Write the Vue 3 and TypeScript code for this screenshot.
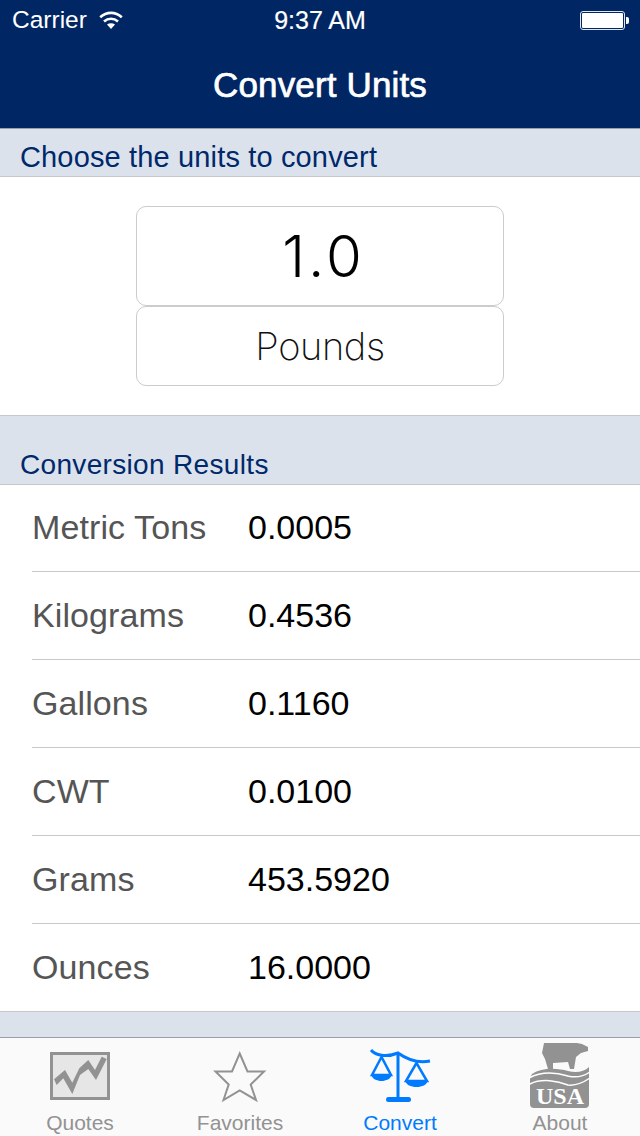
<template>
  <div class="screen">
    <header class="top">
      <div class="status">
        <div class="status-left">
          <span>Carrier</span>
          <svg class="wifi" width="24" height="18" viewBox="0 0 24 18">
            <path d="M1.200 6.200C7.500 .4 16.500 .4 22.800 6.200" fill="none" stroke="#fff" stroke-width="2.600" />
            <path d="M5 10.400c4.200-3.600 9.800-3.600 14 0" fill="none" stroke="#fff" stroke-width="2.600" />
            <path d="M8 13.500c2.400-1.700 5.600-1.700 8 0L12 18z" fill="#fff" />
          </svg>
        </div>
        <span class="clock">9:37 AM</span>
        <div class="battery"><i></i></div>
      </div>
      <h1>Convert Units</h1>
    </header>

    <h2 class="section first">Choose the units to convert</h2>
    <section class="form">
      <div class="field value">1.0</div>
      <div class="field unit">Pounds</div>
    </section>

    <h2 class="section second">Conversion Results</h2>
    <ul class="results">
      <li v-for="row in results" :key="row.name">
        <span class="name">{{ row.name }}</span>
        <span class="num">{{ row.value }}</span>
      </li>
    </ul>

    <div class="spacer"></div>

    <nav class="tabs">
      <div class="tab quotes">
        <svg width="60" height="48" viewBox="0 0 60 48">
          <rect x="1.500" y="1.500" width="57" height="45" fill="#e6e6e6" stroke="#929292" stroke-width="3" />
          <path d="M4 27.300L15 18l7.300 12.700 7-14.400L38.300 8 45 18l6.700-13.300 5 2.300L46 28 38.300 17 30 23l-7.700 19-9-15.700L6.700 33z" fill="#929292" />
        </svg>
        <span>Quotes</span>
      </div>
      <div class="tab star">
        <svg width="54" height="52" viewBox="0 0 54 52">
          <path d="M26.700 2.500L34.500 20.500H51L37.700 33.500 43 49 26.700 39.500 10.500 49 15.700 33.500 2.500 20.500H19z" fill="none" stroke="#929292" stroke-width="2" />
        </svg>
        <span>Favorites</span>
      </div>
      <div class="tab active">
        <svg width="60" height="54" viewBox="0 0 60 54">
          <g fill="none" stroke="#007aff">
            <path d="M1 1C5 6 16 9 28 4 35 9 45 15 60 12" stroke-width="3" />
            <path d="M28 4v45" stroke-width="3" />
            <path d="M11.500 8L2 26h19zM46.500 14L36 32h21z" stroke-width="2.500" />
          </g>
          <path d="M1 25H22C21 30 16 32 11.500 32 7 32 2 30 1 25zM35 31H58C57 36 52 38 46.500 38 41 38 36 36 35 31z" fill="#007aff" />
          <rect x="16" y="48" width="25" height="5" rx="2.500" fill="#007aff" />
        </svg>
        <span>Convert</span>
      </div>
      <div class="tab about">
        <svg width="60" height="68" viewBox="0 0 60 68">
          <path d="M14 1L12 11l3 6 3 10h5V21l15-1 2 7h4l2-12 5-4 7-2V5L52 2l-5-1z" fill="#929292" />
          <path d="M2 32C12 25 28 26 38 29 46 31 54 30 59 25V62a4 4 0 0 1-4 4H4a4 4 0 0 1-4-4V36z" fill="#929292" />
          <path d="M-1 36C12 29 28 31 38 34 46 36 54 34 60 30" fill="none" stroke="#fff" stroke-width="1.500" />
          <path d="M0 42C12 36 28 39 38 43 46 44 54 40 60 36" fill="none" stroke="#fff" stroke-width="1.500" />
          <text x="30" y="62" text-anchor="middle" class="usa">USA</text>
        </svg>
        <span>About</span>
      </div>
    </nav>
  </div>
</template>

<script setup lang="ts">
interface ResultRow {
  name: string
  value: string
}

const results: ResultRow[] = [
  { name: 'Metric Tons', value: '0.0005' },
  { name: 'Kilograms', value: '0.4536' },
  { name: 'Gallons', value: '0.1160' },
  { name: 'CWT', value: '0.0100' },
  { name: 'Grams', value: '453.5920' },
  { name: 'Ounces', value: '16.0000' },
]
</script>

<style>
html,
body {
  margin: 0;
  background: #fff;
}
</style>

<style scoped>
.screen {
  width: 640px;
  height: 1136px;
  display: flex;
  flex-direction: column;
  overflow: hidden;
  background: #fff;
  font-family: 'Liberation Sans', Arial, sans-serif;
}

.top {
  height: 128px;
  background: #002663;
  color: #fff;
  border-bottom: 1px solid #9a9fa8;
  flex: none;
}

.status {
  height: 40px;
  padding: 0 12px;
  display: grid;
  grid-template-columns: 1fr auto 1fr;
  align-items: center;
  font-size: 24.500px;
}

.status-left {
  display: flex;
  align-items: center;
  gap: 12px;
}

.wifi {
  margin-top: -1px;
}

.clock {
  font-size: 25px;
  -webkit-text-stroke: 0.2px #fff;
}

.battery {
  justify-self: end;
  width: 45px;
  height: 19px;
  margin: 1px 3px 0 0;
  padding: 1px;
  box-sizing: border-box;
  border: 1px solid #dfe6f2;
  border-radius: 3px;
  position: relative;
}

.battery i {
  display: block;
  height: 100%;
  background: #fff;
  border-radius: 1px;
}

.battery::after {
  content: '';
  position: absolute;
  right: -5px;
  top: 5px;
  width: 3px;
  height: 7px;
  border-radius: 0 2px 2px 0;
  background: #fff;
}

h1 {
  margin: 0;
  height: 88px;
  line-height: 89px;
  text-align: center;
  font-size: 35px;
  font-weight: 400;
  letter-spacing: 0.15px;
  -webkit-text-stroke: 0.7px #fff;
}

.section {
  margin: 0;
  padding: 0 20px;
  box-sizing: border-box;
  flex: none;
  display: flex;
  align-items: flex-end;
  background: #dce2ec;
  border-bottom: 1px solid #c6c8cc;
  color: #00296b;
  font-weight: 400;
  line-height: 38px;
}

.section.first {
  height: 48px;
  font-size: 29px;
  letter-spacing: 0.15px;
}

.section.second {
  height: 70px;
  border-top: 1px solid #c6c8cc;
  font-size: 28px;
  letter-spacing: 0.33px;
}

.form {
  height: 238px;
  flex: none;
  box-sizing: border-box;
  padding-top: 29px;
  display: flex;
  flex-direction: column;
  align-items: center;
}

.field {
  width: 368px;
  box-sizing: border-box;
  border: 1px solid #ccc;
  border-radius: 10px;
  display: flex;
  align-items: center;
  justify-content: center;
  font-family: Inter, 'Liberation Sans', sans-serif;
  font-weight: 200;
  color: #000;
}

.value {
  height: 100px;
  padding-left: 7px;
  font-size: 58px;
  font-weight: 300;
  letter-spacing: 3px;
}

.unit {
  height: 80px;
  font-size: 38px;
  letter-spacing: -0.4px;
  color: #111;
}

.results {
  list-style: none;
  margin: 0;
  padding: 0 0 0 32px;
  flex: none;
}

.results li {
  height: 88px;
  box-sizing: border-box;
  display: flex;
  align-items: center;
  border-bottom: 1px solid #c8c8cc;
  font-size: 34px;
}

.results li:first-child {
  height: 87px;
  padding-bottom: 1px;
}

.results li:last-child {
  margin-left: -32px;
  padding-left: 32px;
}

.name {
  width: 216px;
  color: #555;
  letter-spacing: 0.1px;
}

.num {
  color: #000;
  font-size: 34px;
}

.spacer {
  flex: 1;
  background: #dce2ec;
}

.tabs {
  height: 99px;
  flex: none;
  display: grid;
  grid-template-columns: repeat(4, 1fr);
  background: #fafafa;
  border-top: 1px solid #9a9fa8;
  box-sizing: border-box;
}

.tab {
  position: relative;
  display: flex;
  flex-direction: column;
  align-items: center;
  justify-content: flex-end;
  color: #929292;
  font-size: 21px;
  line-height: 24px;
  padding-bottom: 1px;
}

.tab svg {
  position: absolute;
  left: 50%;
  transform: translateX(-50%);
  top: 14px;
  overflow: visible;
}

.tab.star svg {
  top: 13px;
}

.tab.active svg {
  top: 11px;
}

.tab.about svg {
  top: 4px;
}

.tab.active {
  color: #007aff;
}

.usa {
  font-family: 'Liberation Serif', serif;
  font-weight: 700;
  font-size: 24px;
  fill: #fff;
}
</style>
